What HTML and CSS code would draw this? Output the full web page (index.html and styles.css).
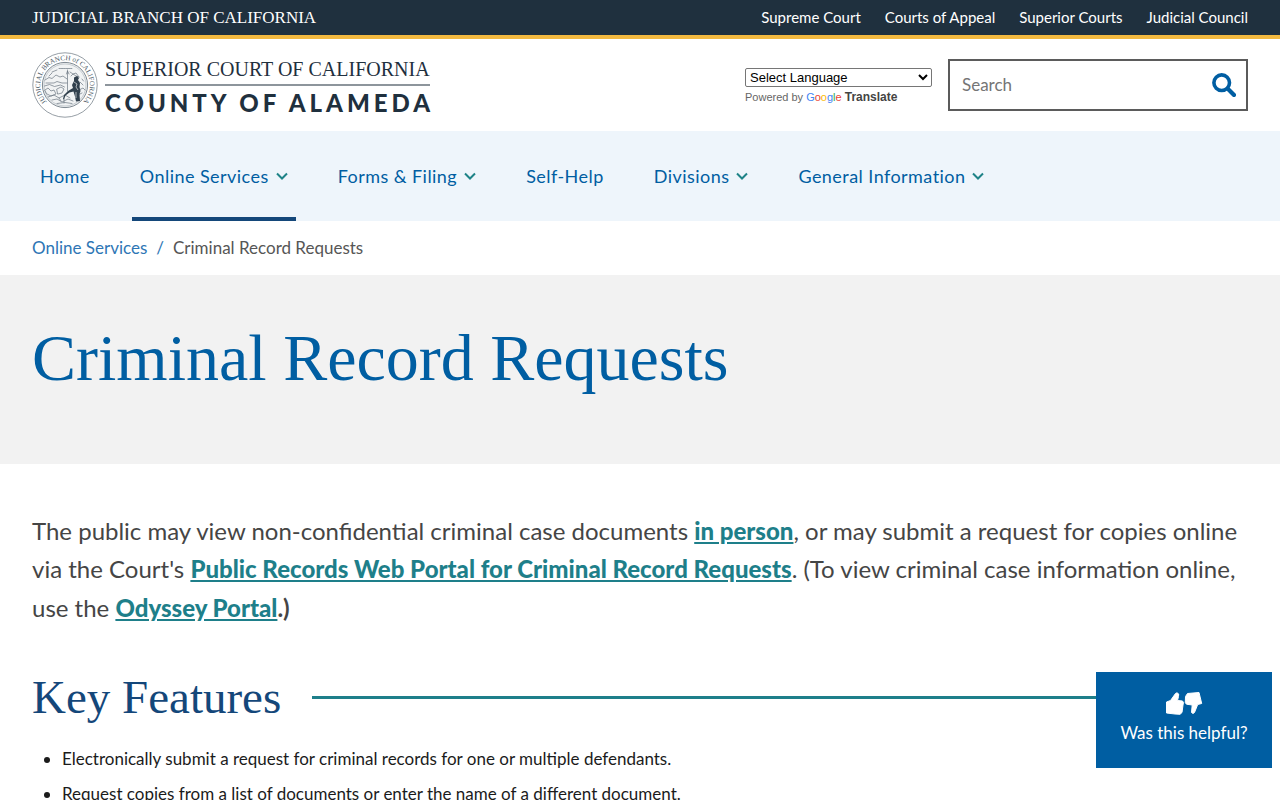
FILE: index.html
```html
<!DOCTYPE html>
<html lang="en">
<head>
<meta charset="utf-8">
<meta name="viewport" content="width=device-width, initial-scale=1">
<title>Criminal Record Requests | Superior Court of California, County of Alameda</title>
<link rel="stylesheet" href="styles.css">
</head>
<body>
<div class="topbar">
  <a class="topbar-brand" href="#">JUDICIAL BRANCH OF CALIFORNIA</a>
  <nav class="topbar-links" aria-label="Judicial branch">
    <a href="#">Supreme Court</a>
    <a href="#">Courts of Appeal</a>
    <a href="#">Superior Courts</a>
    <a href="#">Judicial Council</a>
  </nav>
</div>

<header class="header">
  <a class="logo" href="#">
    <svg class="seal" viewBox="0 0 66 66" aria-hidden="true">
      <defs><path id="seal-arc" d="M14.600 49.600A24.800 24.800 0 1 1 51.400 49.600"/></defs>
      <circle cx="33" cy="33" r="32.2" fill="#fff" stroke="#7b858e" stroke-width=".8"/>
      <circle cx="33" cy="33" r="22.6" fill="#f1f3f4" stroke="#6f7a84" stroke-width=".9"/>
      <circle cx="33" cy="33" r="21" fill="none" stroke="#a9b1b8" stroke-width=".6"/>
      <text class="seal-text"><textPath href="#seal-arc" startOffset="50%" text-anchor="middle">JUDICIAL BRANCH of CALIFORNIA</textPath></text>
      <g fill="none" stroke="#6a7681" stroke-width=".7" stroke-linecap="round" stroke-linejoin="round">
        <path stroke-dasharray="1 .7" d="M27 16.5h13"/>
        <path d="M13 28l4-2.500 3 1 4-3.500 4 2 3-1 4 3M14 31h8l3-1.500 5 1.500h5M12.500 34l5-1.500 5 2 6-1.500 4 2"/>
        <path d="M35.500 18v21M37 22l-1.500-3-1 3M38 20l3 2 3-1 3 4M39 24l2-2 3 2 3 1"/>
        <path d="M13 38l3-2 3 3 3-1 2 4-5 2-4-2zM25 37l4-2 3 2-2 4-4 1zM16 45l6-2 5 3 6-3 5 3M20 48l5-1 5 3 6-3 5 2M25 51.500l8-1 7 1M32 51v-4M29 49l-2-3"/>
        <path d="M48 30l3 3M47 38l4-2 2 2M46 43l4-2M50 27l1.500 2M17 24l3-3M20 20l5-2"/>
      </g>
      <path fill="#31404d" d="M42 25.500l3-1.500 2 2-1 2 2 3-.5 4 1 4-1 3 .5 7-4 .5-1-5-1.500-5-4 1-4 3-1.500 4-1-.5 1-4 4-4 5-3-1-3 2-4z"/>
      <path fill="none" stroke="#fff" stroke-width=".6" d="M42 30l3 2-1 3 2 3M44 40v6"/>
    </svg>
    <span class="logo-text">
      <span class="logo-court">SUPERIOR COURT OF CALIFORNIA</span>
      <span class="logo-county">COUNTY OF ALAMEDA</span>
    </span>
  </a>
  <div class="header-tools">
    <div class="translate">
      <select class="translate-select" aria-label="Language Translate Widget">
        <option>Select Language</option>
      </select>
      <div class="translate-credit">Powered by <a href="#"><span class="google"><span class="g-blue">G</span><span class="g-red">o</span><span class="g-yellow">o</span><span class="g-blue">g</span><span class="g-green">l</span><span class="g-red">e</span></span> <b>Translate</b></a></div>
    </div>
    <form class="search" role="search">
      <input class="search-input" type="text" placeholder="Search" aria-label="Search">
      <button class="search-button" type="button" aria-label="Submit search">
        <svg viewBox="0 0 24 24" width="24" height="24" aria-hidden="true"><circle cx="9.700" cy="9.700" r="7.800" fill="none" stroke="#005ea2" stroke-width="3.600"/><path d="M15.800 15.800l6.200 6.200" stroke="#005ea2" stroke-width="4.200" stroke-linecap="round"/></svg>
      </button>
    </form>
  </div>
</header>

<nav class="mainnav" aria-label="Main">
  <a class="nav-item" href="#">Home</a>
  <a class="nav-item nav-current" href="#">Online Services <svg class="chevron" viewBox="0 0 12 8" aria-hidden="true"><path d="M1 1.500L6 6.500l5-5"/></svg></a>
  <a class="nav-item" href="#">Forms &amp; Filing <svg class="chevron" viewBox="0 0 12 8" aria-hidden="true"><path d="M1 1.500L6 6.500l5-5"/></svg></a>
  <a class="nav-item" href="#">Self-Help</a>
  <a class="nav-item" href="#">Divisions <svg class="chevron" viewBox="0 0 12 8" aria-hidden="true"><path d="M1 1.500L6 6.500l5-5"/></svg></a>
  <a class="nav-item" href="#">General Information <svg class="chevron" viewBox="0 0 12 8" aria-hidden="true"><path d="M1 1.500L6 6.500l5-5"/></svg></a>
</nav>

<nav class="breadcrumb" aria-label="Breadcrumb">
  <a href="#">Online Services</a>
  <span class="breadcrumb-sep">/</span>
  <span>Criminal Record Requests</span>
</nav>

<main>
  <div class="hero"><h1>Criminal Record Requests</h1></div>
  <div class="content">
    <p class="intro">The public may view non-confidential criminal case documents <a href="#">in person</a>, or may submit a request for copies online via the Court's <a href="#">Public Records Web Portal for Criminal Record Requests</a>. (To view criminal case information online, use the <a href="#">Odyssey Portal</a><strong>.)</strong></p>
    <h2>Key Features</h2>
    <ul class="features">
      <li>Electronically submit a request for criminal records for one or multiple defendants.</li>
      <li>Request copies from a list of documents or enter the name of a different document.</li>
    </ul>
  </div>
</main>

<button class="feedback" type="button">
  <svg viewBox="0 0 38 24" width="38" height="24" aria-hidden="true">
    <g fill="#fff" stroke="#fff" stroke-width="1" stroke-linejoin="round">
      <path d="M1.500 10l4-1.500 5-7 1.500-.7 1.700 1.200-.2 2.500-1 4 5 .5 1 1.500-.5 2.500-1 7.500-2 1.800-5-.3-8.500-1z"/>
      <path d="M20.500 4.500l2-3 11.500-1 2.700 11-4 1-3.200 8-1.500 1-1.500-1 .7-7.500-5.700-.8-1.200-1.500z"/>
    </g>
  </svg>
  <span>Was this helpful?</span>
</button>
</body>
</html>
```
FILE: styles.css
```css
* { box-sizing: border-box; }

html, body { overflow-x: hidden; }

body {
  margin: 0;
  background: #fff;
  color: #1b1b1b;
  font-family: Lato, "Liberation Sans", sans-serif;
  font-size: 17px;
}

a { text-decoration: none; }

.topbar {
  display: flex;
  justify-content: space-between;
  align-items: center;
  padding: 0 32px;
  min-height: 39px;
  background: #1f303e;
  border-bottom: 4px solid #f2b940;
}
.topbar a { color: #fff; }
.topbar-brand {
  font-family: "Liberation Serif", serif;
  font-size: 17px;
}
.topbar-links {
  display: flex;
  gap: 24px;
  padding-bottom: 2px;
  font-size: 15px;
}

.header {
  display: flex;
  justify-content: space-between;
  align-items: center;
  padding: 0 32px;
  min-height: 92px;
}
.logo {
  display: flex;
  align-items: center;
  gap: 7px;
  color: #1f303e;
}
.seal { width: 66px; height: 66px; }
.seal-text {
  font-family: "Liberation Serif", serif;
  font-size: 7px;
  fill: #4a5864;
}
.logo-text { display: flex; flex-direction: column; }
.logo-court {
  padding-top: 3px;
  padding-bottom: 3px;
  border-bottom: 2px solid #8d959c;
  font-family: "Liberation Serif", serif;
  font-size: 20px;
  line-height: 24px;
}
.logo-county {
  padding-top: 3px;
  margin-right: -4px;
  font-size: 24px;
  font-weight: 900;
  line-height: 28px;
  letter-spacing: 4px;
}

.header-tools {
  display: flex;
  align-items: center;
  gap: 16px;
}
.translate {
  width: 187px;
  padding-top: 2px;
  font-family: "Liberation Sans", sans-serif;
}
.translate-select {
  display: block;
  width: 100%;
  height: 19px;
  font-family: "Liberation Sans", sans-serif;
  font-size: 13px;
  color: #000;
  background: #fff;
  border: 1px solid #767676;
  border-radius: 2px;
}
.translate-credit {
  padding-top: 2px;
  font-size: 11px;
  line-height: 16px;
  color: #666;
}
.translate-credit b { color: #444; font-size: 12px; }
.g-blue { color: #4285f4; }
.g-red { color: #ea4335; }
.g-yellow { color: #fbbc05; }
.g-green { color: #34a853; }

.search {
  display: flex;
  width: 300px;
  height: 52px;
  border: 2px solid #5b5b5b;
}
.search-input {
  flex: 1;
  min-width: 0;
  padding: 0 12px 2px;
  border: 0;
  background: none;
  font: inherit;
}
.search-input::placeholder { color: #757575; }
.search-button {
  display: flex;
  align-items: center;
  padding: 0 10px;
  border: 0;
  background: none;
}

.mainnav {
  display: flex;
  gap: 34px;
  padding: 0 32px;
  min-height: 90px;
  background: #eef5fb;
}
.nav-item {
  display: flex;
  align-items: center;
  gap: 7px;
  padding: 4px 8px 0;
  border-bottom: 4px solid transparent;
  color: #005ea2;
  font-size: 18px;
  letter-spacing: .025em;
}
.nav-current { border-bottom-color: #14477a; }
.chevron { width: 12px; height: 8px; }
.chevron path {
  fill: none;
  stroke: #1e8387;
  stroke-width: 2;
}

.breadcrumb {
  display: flex;
  align-items: center;
  gap: 9px;
  padding: 0 32px 2px;
  min-height: 54px;
  color: #565656;
}
.breadcrumb a, .breadcrumb-sep { color: #2e76b5; }

.hero {
  padding: 47px 32px 70px;
  background: #f2f2f2;
}
h1, h2 {
  margin: 0;
  font-family: "Liberation Serif", serif;
  font-weight: 400;
}
h1 {
  color: #005ea2;
  font-size: 66px;
  line-height: 72px;
}

.content { padding: 48px 32px 64px; }
.intro {
  margin: 0;
  color: #454545;
  font-size: 24px;
  line-height: 1.6;
}
.intro a {
  color: #1e7f8a;
  font-weight: 900;
  text-decoration: underline;
}
h2 {
  display: flex;
  align-items: center;
  gap: 31px;
  margin-top: 44px;
  color: #14477a;
  font-size: 47px;
  line-height: 52px;
}
h2::after {
  content: "";
  flex: 1;
  height: 3px;
  background: #1e7f8a;
}
.features {
  margin: 22px 0 0;
  padding-left: 30px;
  line-height: 27px;
}
.features li { margin-bottom: 8px; }

.feedback {
  position: fixed;
  right: 8px;
  bottom: 32px;
  display: flex;
  flex-direction: column;
  align-items: center;
  gap: 6px;
  width: 176px;
  padding: 20px 8px 25px;
  border: 0;
  background: #005ea2;
  color: #fff;
  font: inherit;
  line-height: 21px;
}
```
